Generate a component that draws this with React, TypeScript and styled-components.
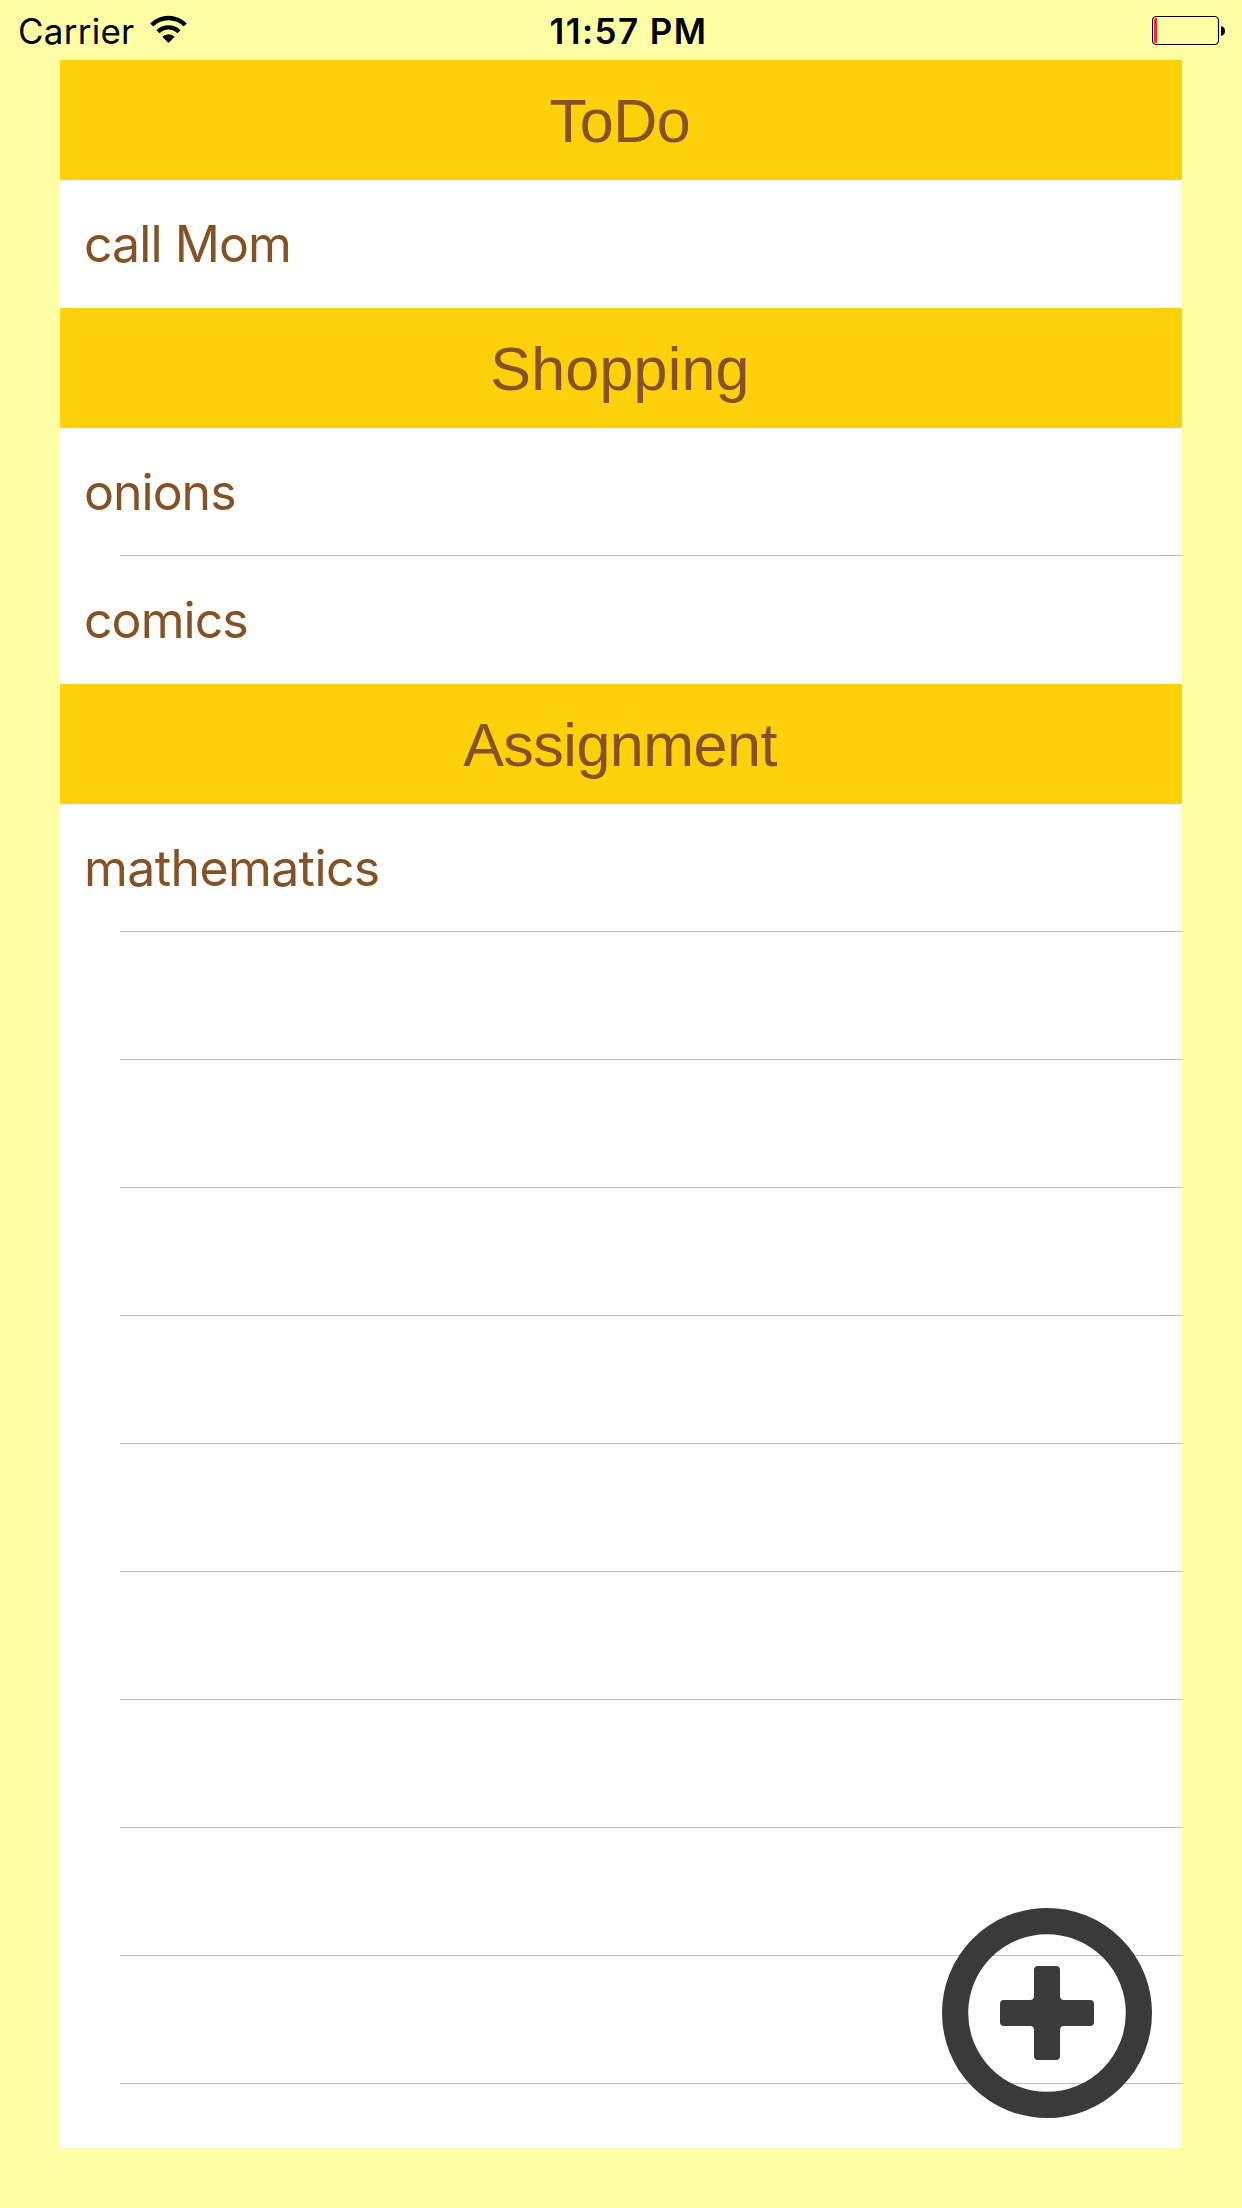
import React from 'react';
import styled, { createGlobalStyle } from 'styled-components';

const GlobalStyle = createGlobalStyle`
  * { box-sizing: border-box; }
  body { margin: 0; background: #ffffa6; }
`;

const Screen = styled.div`
  position: relative;
  width: 1242px;
  height: 2208px;
  display: flex;
  flex-direction: column;
  background: #ffffa6;
`;

const StatusBar = styled.header`
  height: 60px;
  flex: none;
  display: grid;
  grid-template-columns: 1fr auto 1fr;
  align-items: start;
  padding: 0 17px 0 18px;
  font: 400 35px/62px Inter, "Liberation Sans", sans-serif;
  color: #000;
`;

const Signal = styled.div`
  display: flex;
  height: 60px;
  letter-spacing: 0.25px;

  svg { margin-left: 15px; }
`;

const Time = styled.time`
  font-weight: 600;
  letter-spacing: 1.4px;
  margin-left: 14px;
`;

const Power = styled.div`
  display: flex;
  justify-content: flex-end;
`;

const List = styled.main`
  width: 1122px;
  height: 2088px;
  margin: 0 auto;
  overflow: hidden;
  background: #fff;
`;

const SectionHeader = styled.h2<{ $tracking: number }>`
  height: 120px;
  margin: 0;
  padding: 1px 2px 0 0;
  background: #ffd10d;
  color: #845225;
  font: 400 61px/120px "Liberation Sans", Arial, sans-serif;
  letter-spacing: ${p => p.$tracking}px;
  text-align: center;
`;

const Row = styled.div<{ $tracking?: number }>`
  height: 128px;
  display: flex;
  flex-direction: column;
  padding-left: 24px;
  color: #845225;
  font: 400 50px/128px Inter, "Liberation Sans", sans-serif;
  letter-spacing: ${p => p.$tracking ?? 0}px;
`;

const RowLabel = styled.span`
  height: 127px;
`;

const Divider = styled.div`
  height: 1px;
  margin-left: 36px;
  background: #bcbbc1;
`;

const AddButton = styled.button`
  position: absolute;
  left: 942px;
  top: 1908px;
  width: 210px;
  height: 210px;
  padding: 0;
  border: 0;
  background: none;

  svg { display: block; }
`;

const sections = [
  { title: 'ToDo', tracking: -0.4, items: [{ label: 'call Mom', tracking: -0.95 }] },
  {
    title: 'Shopping',
    tracking: 0.2,
    items: [
      { label: 'onions', tracking: -1 },
      { label: 'comics', tracking: -0.95 },
    ],
  },
  { title: 'Assignment', tracking: -0.5, items: [{ label: 'mathematics', tracking: -0.6 }] },
];

const EMPTY_ROWS = 10;

function WifiIcon() {
  return (
    <svg width="38" height="48" viewBox="149 0 38 48" aria-hidden="true">
      <path d="M150.2 23.4A25.6 25.6 0 0 1 186.8 23.4L183.7 26.5A21.4 21.4 0 0 0 153.3 26.5Z" />
      <path d="M156.4 30.2A17 17 0 0 1 180.6 30.2L177.5 33.3A12.6 12.6 0 0 0 159.5 33.3Z" />
      <path d="M162.3 36.7A8.8 8.8 0 0 1 174.7 36.7L168.5 43Z" />
    </svg>
  );
}

function BatteryIcon() {
  return (
    <svg width="73" height="48" viewBox="1152 0 73 48" aria-hidden="true">
      <rect x="1152.5" y="16.5" width="66" height="28" rx="4" fill="none" stroke="#000" strokeWidth="1.2" />
      <path d="M1157 18H1155.5Q1154 18.3 1154 20V41Q1154 42.7 1155.5 43H1157Z" fill="#ff1f28" />
      <path d="M1221 26C1223.8 26.6 1225 28.4 1225 31S1223.8 35.4 1221 36Z" />
    </svg>
  );
}

export default function App() {
  return (
    <>
      <GlobalStyle />
      <Screen>
        <StatusBar>
          <Signal>
            Carrier
            <WifiIcon />
          </Signal>
          <Time>11:57 PM</Time>
          <Power>
            <BatteryIcon />
          </Power>
        </StatusBar>
        <List>
          {sections.map((section, s) => (
            <section key={section.title}>
              <SectionHeader $tracking={section.tracking}>{section.title}</SectionHeader>
              {section.items.map((item, i) => (
                <Row key={item.label} $tracking={item.tracking}>
                  <RowLabel>{item.label}</RowLabel>
                  {(i < section.items.length - 1 || s === sections.length - 1) && <Divider />}
                </Row>
              ))}
            </section>
          ))}
          {Array.from({ length: EMPTY_ROWS }, (_, i) => (
            <Row key={i}>
              <RowLabel />
              <Divider />
            </Row>
          ))}
        </List>
        <AddButton aria-label="Add">
          <svg width="210" height="210" viewBox="0 0 210 210">
            <circle cx="105" cy="105" r="91.9" fill="none" stroke="#3a3a3a" strokeWidth="26.2" />
            <path
              fill="#3a3a3a"
              d="M96 58H114Q118 58 118 62V88Q118 92 122 92H148Q152 92 152 96V114Q152 118 148 118H122Q118 118 118 122V148Q118 152 114 152H96Q92 152 92 148V122Q92 118 88 118H62Q58 118 58 114V96Q58 92 62 92H88Q92 92 92 88V62Q92 58 96 58Z"
            />
          </svg>
        </AddButton>
      </Screen>
    </>
  );
}
